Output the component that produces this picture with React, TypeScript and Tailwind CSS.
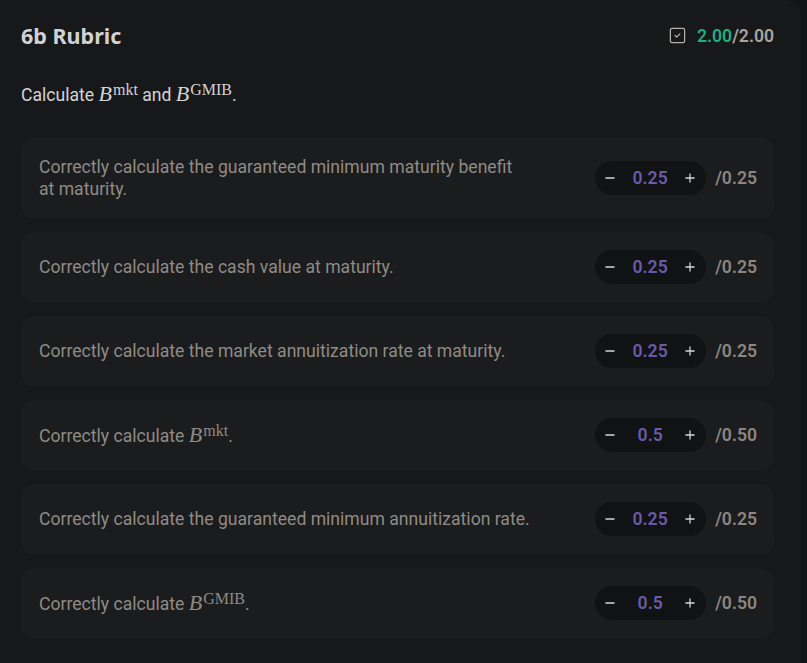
import { Minus, Plus, SquareCheck } from 'lucide-react';
import type { ReactNode } from 'react';

interface Criterion {
  text: ReactNode;
  score: string;
  max: string;
}

const Sym = ({ sup }: { sup: string }) => (
  <span className="font-['Liberation_Serif',serif] whitespace-nowrap leading-none">
    <span className="italic text-[22px] leading-none">B</span>
    <sup className="text-[16px] leading-none relative -top-[6px] ml-[1px]">{sup}</sup>
  </span>
);

const criteria: Criterion[] = [
  {
    text: 'Correctly calculate the guaranteed minimum maturity benefit at maturity.',
    score: '0.25',
    max: '/0.25',
  },
  { text: 'Correctly calculate the cash value at maturity.', score: '0.25', max: '/0.25' },
  {
    text: 'Correctly calculate the market annuitization rate at maturity.',
    score: '0.25',
    max: '/0.25',
  },
  {
    text: (
      <>
        Correctly calculate <Sym sup="mkt" />.
      </>
    ),
    score: '0.5',
    max: '/0.50',
  },
  {
    text: 'Correctly calculate the guaranteed minimum annuitization rate.',
    score: '0.25',
    max: '/0.25',
  },
  {
    text: (
      <>
        Correctly calculate <Sym sup="GMIB" />.
      </>
    ),
    score: '0.5',
    max: '/0.50',
  },
];

const ScoreStepper = ({ score, max }: { score: string; max: string }) => (
  <div className="flex items-center gap-[9px] shrink-0">
    <div className="flex items-center h-[34px] w-[111px] rounded-full bg-[#111213] pl-[8px] pr-[9px]">
      <Minus size={14} strokeWidth={2.2} className="text-[#d6d6d6]" />
      <span className="flex-1 text-center font-semibold text-[17.6px] text-[#6a5aa8]">{score}</span>
      <Plus size={14} strokeWidth={2.2} className="text-[#d6d6d6]" />
    </div>
    <span className="font-semibold text-[17.6px] text-[#8b8680]">{max}</span>
  </div>
);

export default function App() {
  return (
    <div className="min-h-[663px] bg-[#131416] font-['Roboto',sans-serif]">
      <div className="w-[801px] min-h-[663px] bg-[#17181a] rounded-tr-2xl pl-[21px] pr-[27px] pt-5 pb-6">
        {/* header */}
        <div className="flex items-center justify-between h-8">
          <h2 className="text-[21.5px] font-bold text-[#d2d2d2] font-['Noto_Sans',sans-serif]">
            6b Rubric
          </h2>
          <div className="flex items-center gap-[10px] font-semibold text-[17.6px]">
            <SquareCheck size={19} strokeWidth={1.6} className="text-[#b3afa9]" />
            <span>
              <span className="text-[#21ad7c]">2.00</span>
              <span className="text-[#a8a39d]">/2.00</span>
            </span>
          </div>
        </div>

        <p className="mt-[31px] text-[17.6px] leading-6 text-[#d4d4d4]">
          Calculate <Sym sup="mkt" /> and <Sym sup="GMIB" />.
        </p>

        {/* criteria */}
        <div className="mt-[31px] flex flex-col gap-[14px]">
          {criteria.map((c, i) => (
            <div
              key={i}
              className="flex items-center justify-between gap-6 rounded-xl bg-[#1b1c1e] px-[18px] pr-[17px] py-[18px] min-h-[70px]"
            >
              <p className="max-w-[491px] text-[17.6px] leading-[22px] text-[#8f8b85]">{c.text}</p>
              <ScoreStepper score={c.score} max={c.max} />
            </div>
          ))}
        </div>
      </div>
    </div>
  );
}
